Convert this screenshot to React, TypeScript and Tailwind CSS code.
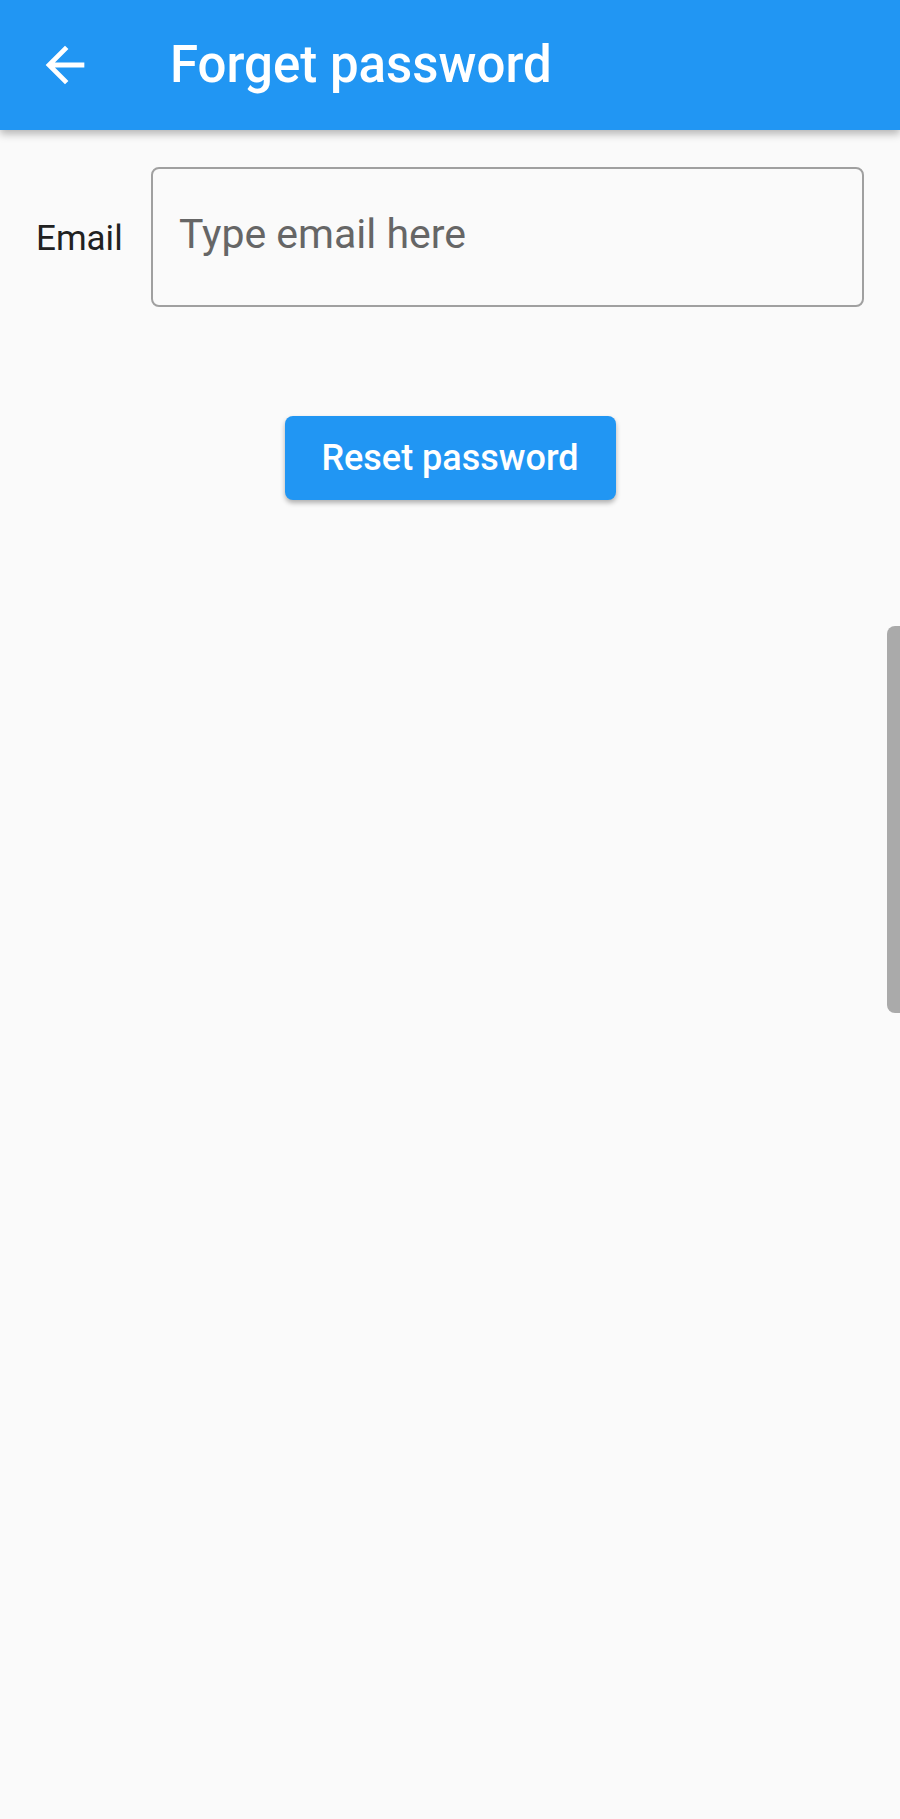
import React from "react";

export default function App() {
  return (
    <div className="relative min-h-[1819px] w-full bg-[#fafafa] overflow-hidden" style={{ fontFamily: "Roboto, 'Noto Sans', sans-serif" }}>
      <header className="h-[130px] bg-[#2196f3] flex items-center shadow-[0_4px_8px_rgba(0,0,0,0.28)] relative z-10">
        <div className="ml-[36px] w-[58px] h-[58px] flex items-center justify-center">
          <svg viewBox="0 0 24 24" className="w-[58px] h-[58px]" fill="#ffffff">
            <path d="M20 11H7.83l5.59-5.59L12 4l-8 8 8 8 1.41-1.41L7.83 13H20v-2z" />
          </svg>
        </div>
        <h1 className="ml-[76px] text-white text-[51px] font-medium leading-none -mt-[2px]">Forget password</h1>
      </header>

      <div className="mt-[37px] px-[36px] flex items-center">
        <label className="w-[115px] shrink-0 text-[35px] text-[#212121] leading-none pt-[2px]">Email</label>
        <div className="flex-1 h-[140px] border-2 border-[#a0a0a0] rounded-[8px] flex items-center pl-[26px] pb-[6px]">
          <span className="text-[41px] text-[#666666] leading-none">Type email here</span>
        </div>
      </div>

      <div className="mt-[109px] flex justify-center">
        <button className="w-[331px] h-[84px] bg-[#2196f3] rounded-[8px] text-white text-[36px] font-medium leading-none shadow-[0_3px_5px_rgba(0,0,0,0.3)]">
          Reset password
        </button>
      </div>

      <div className="absolute right-0 top-[626px] w-[13px] h-[387px] bg-[#aaaaaa] rounded-l-[8px]" />
    </div>
  );
}
